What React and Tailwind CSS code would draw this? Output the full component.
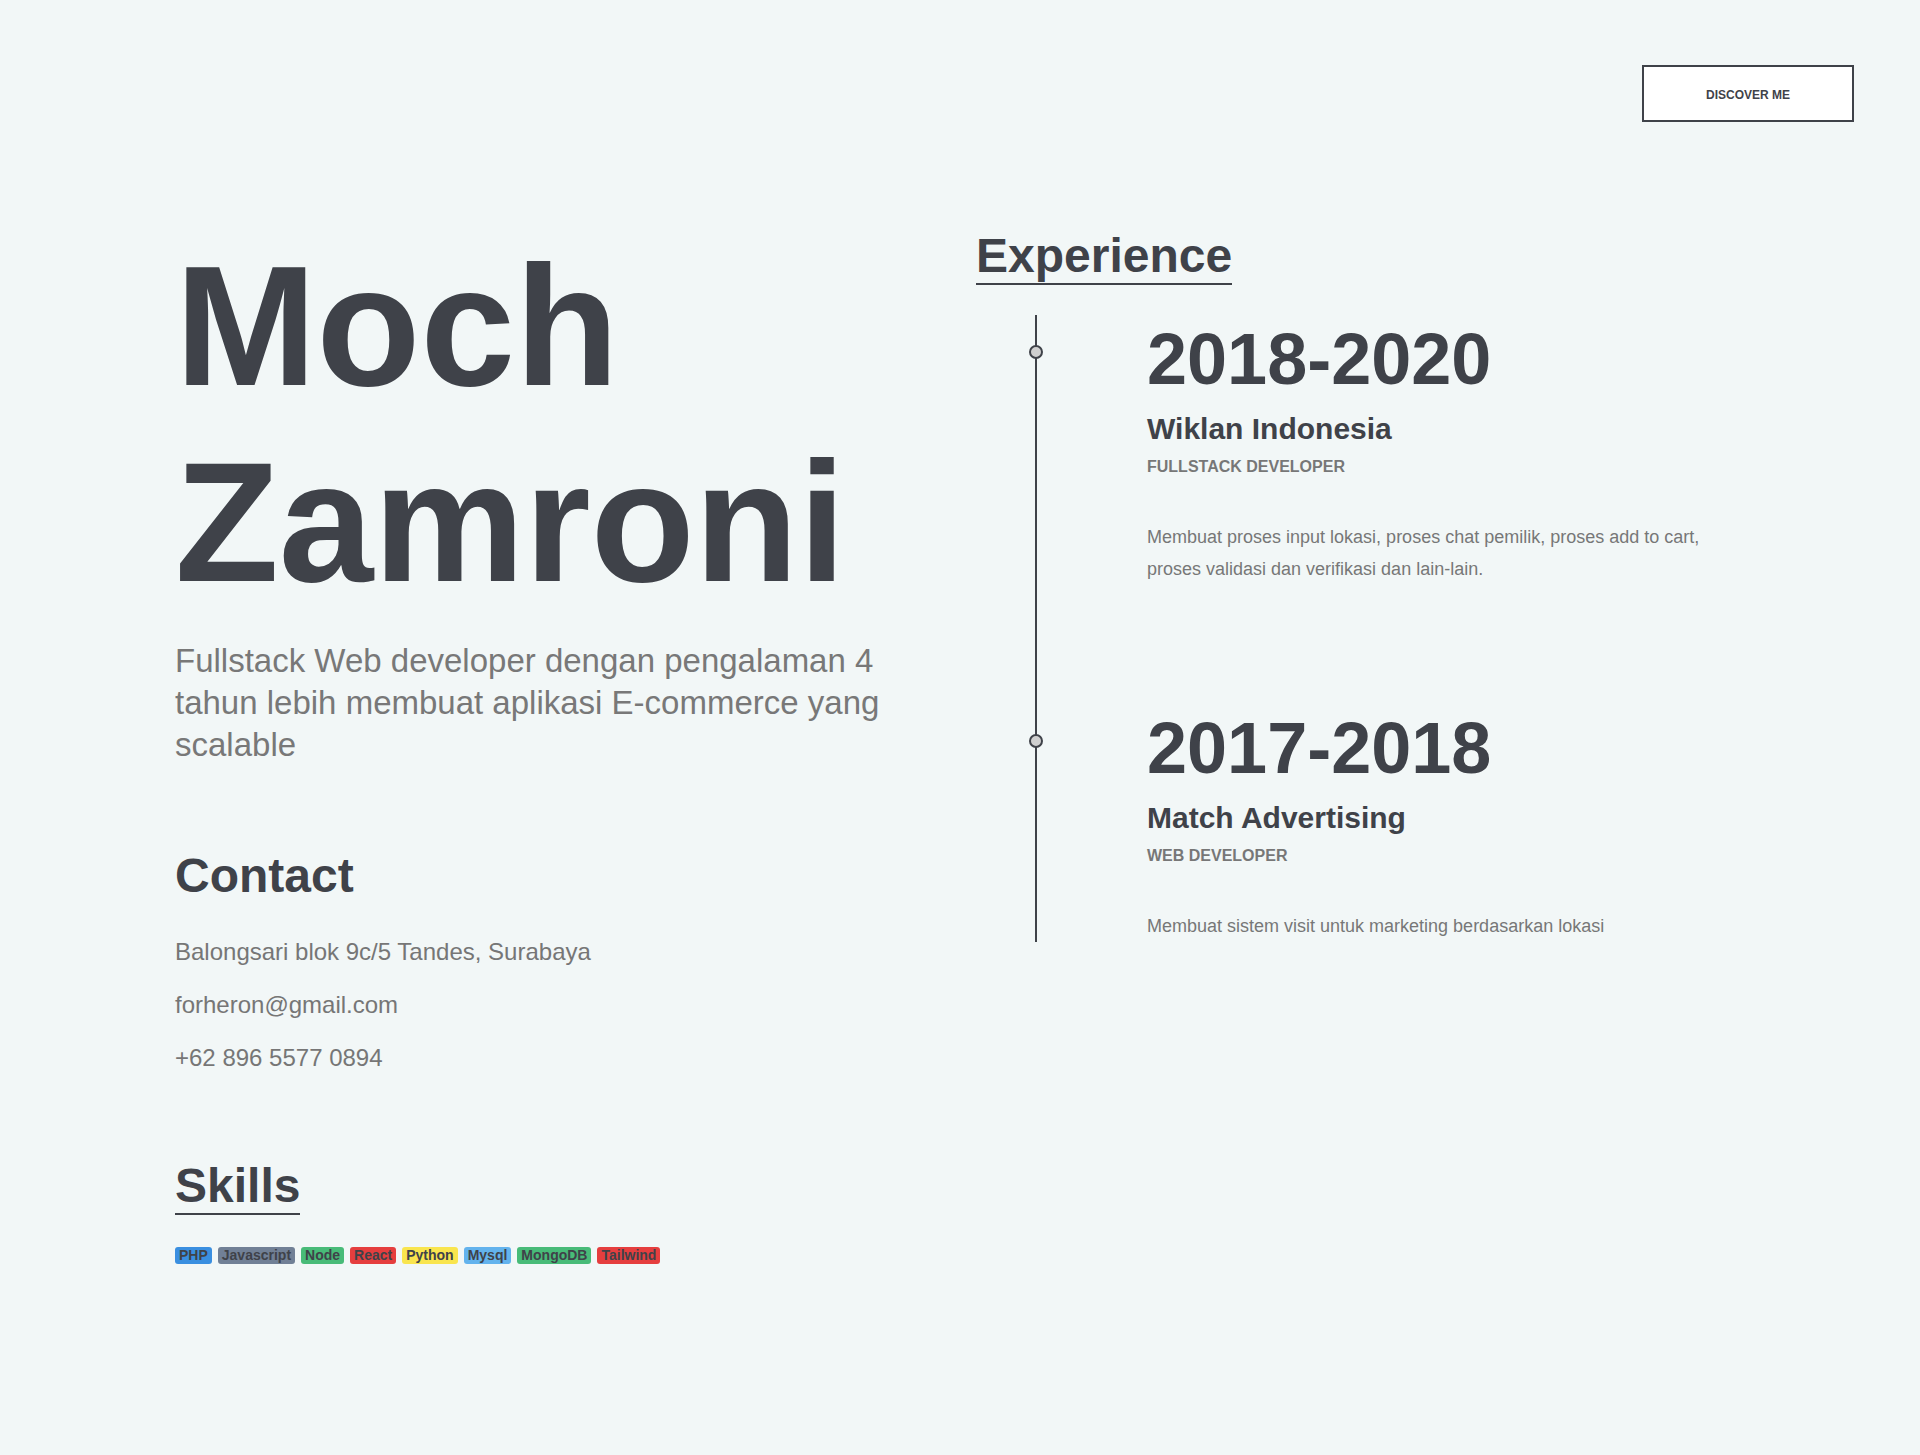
const experiences = [
  {
    period: '2018-2020',
    company: 'Wiklan Indonesia',
    role: 'Fullstack Developer',
    description:
      'Membuat proses input lokasi, proses chat pemilik, proses add to cart, proses validasi dan verifikasi dan lain-lain.',
  },
  {
    period: '2017-2018',
    company: 'Match Advertising',
    role: 'Web Developer',
    description: 'Membuat sistem visit untuk marketing berdasarkan lokasi',
  },
];

const skills = [
  { name: 'PHP', color: 'bg-[#3a8fe0]' },
  { name: 'Javascript', color: 'bg-[#718096]' },
  { name: 'Node', color: 'bg-[#48bb78]' },
  { name: 'React', color: 'bg-[#e53e3e]' },
  { name: 'Python', color: 'bg-[#f9e54e]' },
  { name: 'Mysql', color: 'bg-[#63b3ed]' },
  { name: 'MongoDB', color: 'bg-[#48bb78]' },
  { name: 'Tailwind', color: 'bg-[#e53e3e]' },
];

function ExperienceItem({ item }) {
  return (
    <div className="relative pl-[110px] pt-2">
      <span className="absolute -left-[8px] top-[30px] h-[14px] w-[14px] rounded-full border-2 border-[#3f4249] bg-[#cfcfcf]" />
      <h3 className="text-[72px] font-bold leading-[72px]">{item.period}</h3>
      <h4 className="mt-4 text-[30px] font-bold leading-[36px]">{item.company}</h4>
      <p className="mt-2 text-[16px] font-bold uppercase leading-6 text-[#777]">{item.role}</p>
      <p className="mt-[42px] max-w-[600px] text-[18px] leading-[32px] text-[#777]">{item.description}</p>
    </div>
  );
}

export default function App() {
  return (
    <div className="min-h-[1455px] bg-[#f2f7f7] font-['Liberation_Sans',Arial,sans-serif] text-[#3f4249]">
      <header className="flex justify-end pr-[66px] pt-[65px]">
        <button className="h-[57px] w-[212px] border-2 border-[#3f4249] bg-white pt-[2px] text-[12px] font-bold">
          DISCOVER ME
        </button>
      </header>

      <main className="mt-[106px] grid grid-cols-[801px_1fr] pl-[175px] pr-[175px]">
        <section>
          <h1 className="text-[170px] font-bold leading-[196px]">
            Moch
            <br />
            Zamroni
          </h1>
          <p className="mt-5 w-[760px] text-[33px] leading-[42px] text-[#787878]">
            Fullstack Web developer dengan pengalaman 4 tahun lebih membuat aplikasi E-commerce yang scalable
          </p>

          <h2 className="mt-[82px] text-[48px] font-bold leading-[55px]">Contact</h2>
          <div className="mt-[33px] flex flex-col gap-[21px] text-[24px] leading-8 text-[#767676]">
            <p>Balongsari blok 9c/5 Tandes, Surabaya</p>
            <p>forheron@gmail.com</p>
            <p>+62 896 5577 0894</p>
          </div>

          <h2 className="mt-[84px] w-fit border-b-2 border-[#3f4249] text-[48px] font-bold leading-[55px]">Skills</h2>
          <div className="mt-8 flex gap-[6px]">
            {skills.map((s) => (
              <span
                key={s.name}
                className={`h-[17px] rounded-[3px] px-[4px] text-[14px] font-bold leading-[17px] text-[#3f4249] ${s.color}`}
              >
                {s.name}
              </span>
            ))}
          </div>
        </section>

        <section>
          <h2 className="w-fit border-b-2 border-[#3f4249] text-[48px] font-bold leading-[55px]">Experience</h2>
          <div className="ml-[59px] mt-[30px] flex flex-col gap-[119px] border-l-2 border-[#3f4249]">
            {experiences.map((item) => (
              <ExperienceItem key={item.period} item={item} />
            ))}
          </div>
        </section>
      </main>
    </div>
  );
}
